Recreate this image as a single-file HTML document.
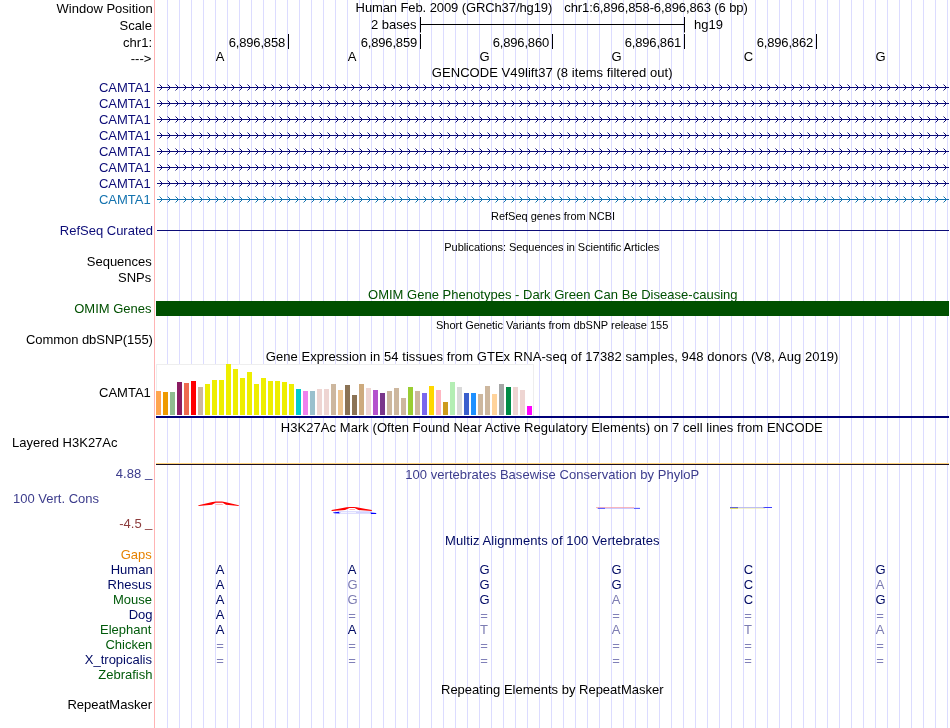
<!DOCTYPE html>
<html><head><meta charset="utf-8"><title>Genome Browser</title>
<style>
html,body{margin:0;padding:0;background:#fff;}
body{width:950px;height:728px;position:relative;overflow:hidden;-webkit-font-smoothing:antialiased;font-family:"Liberation Sans",sans-serif;font-size:13px;color:#000;}
.t{position:absolute;white-space:pre;line-height:16px;height:16px;}
.r{right:798px;text-align:right;}
.c{left:156px;width:794px;text-align:center;}
.s{font-size:11px;}
.l{position:absolute;width:16px;margin-left:-8px;text-align:center;line-height:15px;height:15px;}
svg{position:absolute;left:0;top:0;}
#tx{position:absolute;left:0;top:0;width:950px;height:728px;will-change:transform;}
</style></head><body>

<svg width="950" height="728" viewBox="0 0 950 728">
<path d="M167.5 0V728M179.5 0V728M191.5 0V728M203.5 0V728M215.5 0V728M227.5 0V728M239.5 0V728M251.5 0V728M263.5 0V728M275.5 0V728M287.5 0V728M299.5 0V728M311.5 0V728M323.5 0V728M335.5 0V728M347.5 0V728M359.5 0V728M371.5 0V728M383.5 0V728M395.5 0V728M407.5 0V728M419.5 0V728M431.5 0V728M443.5 0V728M455.5 0V728M467.5 0V728M479.5 0V728M491.5 0V728M503.5 0V728M515.5 0V728M527.5 0V728M539.5 0V728M551.5 0V728M563.5 0V728M575.5 0V728M587.5 0V728M599.5 0V728M611.5 0V728M623.5 0V728M635.5 0V728M647.5 0V728M659.5 0V728M671.5 0V728M683.5 0V728M695.5 0V728M707.5 0V728M719.5 0V728M731.5 0V728M743.5 0V728M755.5 0V728M767.5 0V728M779.5 0V728M791.5 0V728M803.5 0V728M815.5 0V728M827.5 0V728M839.5 0V728M851.5 0V728M863.5 0V728M875.5 0V728M887.5 0V728M899.5 0V728M911.5 0V728M923.5 0V728M935.5 0V728M947.5 0V728" stroke="#dcdcff" stroke-width="1" fill="none" shape-rendering="crispEdges"/>
<rect x="154" y="0" width="1" height="728" fill="#ffb4b4"/>
<path d="M157 87.5H949M159.5 84.5L162.5 87.5L159.5 90.5M167.5 84.5L170.5 87.5L167.5 90.5M175.5 84.5L178.5 87.5L175.5 90.5M183.5 84.5L186.5 87.5L183.5 90.5M191.5 84.5L194.5 87.5L191.5 90.5M199.5 84.5L202.5 87.5L199.5 90.5M207.5 84.5L210.5 87.5L207.5 90.5M215.5 84.5L218.5 87.5L215.5 90.5M223.5 84.5L226.5 87.5L223.5 90.5M231.5 84.5L234.5 87.5L231.5 90.5M239.5 84.5L242.5 87.5L239.5 90.5M247.5 84.5L250.5 87.5L247.5 90.5M255.5 84.5L258.5 87.5L255.5 90.5M263.5 84.5L266.5 87.5L263.5 90.5M271.5 84.5L274.5 87.5L271.5 90.5M279.5 84.5L282.5 87.5L279.5 90.5M287.5 84.5L290.5 87.5L287.5 90.5M295.5 84.5L298.5 87.5L295.5 90.5M303.5 84.5L306.5 87.5L303.5 90.5M311.5 84.5L314.5 87.5L311.5 90.5M319.5 84.5L322.5 87.5L319.5 90.5M327.5 84.5L330.5 87.5L327.5 90.5M335.5 84.5L338.5 87.5L335.5 90.5M343.5 84.5L346.5 87.5L343.5 90.5M351.5 84.5L354.5 87.5L351.5 90.5M359.5 84.5L362.5 87.5L359.5 90.5M367.5 84.5L370.5 87.5L367.5 90.5M375.5 84.5L378.5 87.5L375.5 90.5M383.5 84.5L386.5 87.5L383.5 90.5M391.5 84.5L394.5 87.5L391.5 90.5M399.5 84.5L402.5 87.5L399.5 90.5M407.5 84.5L410.5 87.5L407.5 90.5M415.5 84.5L418.5 87.5L415.5 90.5M423.5 84.5L426.5 87.5L423.5 90.5M431.5 84.5L434.5 87.5L431.5 90.5M439.5 84.5L442.5 87.5L439.5 90.5M447.5 84.5L450.5 87.5L447.5 90.5M455.5 84.5L458.5 87.5L455.5 90.5M463.5 84.5L466.5 87.5L463.5 90.5M471.5 84.5L474.5 87.5L471.5 90.5M479.5 84.5L482.5 87.5L479.5 90.5M487.5 84.5L490.5 87.5L487.5 90.5M495.5 84.5L498.5 87.5L495.5 90.5M503.5 84.5L506.5 87.5L503.5 90.5M511.5 84.5L514.5 87.5L511.5 90.5M519.5 84.5L522.5 87.5L519.5 90.5M527.5 84.5L530.5 87.5L527.5 90.5M535.5 84.5L538.5 87.5L535.5 90.5M543.5 84.5L546.5 87.5L543.5 90.5M551.5 84.5L554.5 87.5L551.5 90.5M559.5 84.5L562.5 87.5L559.5 90.5M567.5 84.5L570.5 87.5L567.5 90.5M575.5 84.5L578.5 87.5L575.5 90.5M583.5 84.5L586.5 87.5L583.5 90.5M591.5 84.5L594.5 87.5L591.5 90.5M599.5 84.5L602.5 87.5L599.5 90.5M607.5 84.5L610.5 87.5L607.5 90.5M615.5 84.5L618.5 87.5L615.5 90.5M623.5 84.5L626.5 87.5L623.5 90.5M631.5 84.5L634.5 87.5L631.5 90.5M639.5 84.5L642.5 87.5L639.5 90.5M647.5 84.5L650.5 87.5L647.5 90.5M655.5 84.5L658.5 87.5L655.5 90.5M663.5 84.5L666.5 87.5L663.5 90.5M671.5 84.5L674.5 87.5L671.5 90.5M679.5 84.5L682.5 87.5L679.5 90.5M687.5 84.5L690.5 87.5L687.5 90.5M695.5 84.5L698.5 87.5L695.5 90.5M703.5 84.5L706.5 87.5L703.5 90.5M711.5 84.5L714.5 87.5L711.5 90.5M719.5 84.5L722.5 87.5L719.5 90.5M727.5 84.5L730.5 87.5L727.5 90.5M735.5 84.5L738.5 87.5L735.5 90.5M743.5 84.5L746.5 87.5L743.5 90.5M751.5 84.5L754.5 87.5L751.5 90.5M759.5 84.5L762.5 87.5L759.5 90.5M767.5 84.5L770.5 87.5L767.5 90.5M775.5 84.5L778.5 87.5L775.5 90.5M783.5 84.5L786.5 87.5L783.5 90.5M791.5 84.5L794.5 87.5L791.5 90.5M799.5 84.5L802.5 87.5L799.5 90.5M807.5 84.5L810.5 87.5L807.5 90.5M815.5 84.5L818.5 87.5L815.5 90.5M823.5 84.5L826.5 87.5L823.5 90.5M831.5 84.5L834.5 87.5L831.5 90.5M839.5 84.5L842.5 87.5L839.5 90.5M847.5 84.5L850.5 87.5L847.5 90.5M855.5 84.5L858.5 87.5L855.5 90.5M863.5 84.5L866.5 87.5L863.5 90.5M871.5 84.5L874.5 87.5L871.5 90.5M879.5 84.5L882.5 87.5L879.5 90.5M887.5 84.5L890.5 87.5L887.5 90.5M895.5 84.5L898.5 87.5L895.5 90.5M903.5 84.5L906.5 87.5L903.5 90.5M911.5 84.5L914.5 87.5L911.5 90.5M919.5 84.5L922.5 87.5L919.5 90.5M927.5 84.5L930.5 87.5L927.5 90.5M935.5 84.5L938.5 87.5L935.5 90.5M943.5 84.5L946.5 87.5L943.5 90.5" stroke="#0c0c78" stroke-width="1" fill="none"/>
<path d="M157 103.5H949M159.5 100.5L162.5 103.5L159.5 106.5M167.5 100.5L170.5 103.5L167.5 106.5M175.5 100.5L178.5 103.5L175.5 106.5M183.5 100.5L186.5 103.5L183.5 106.5M191.5 100.5L194.5 103.5L191.5 106.5M199.5 100.5L202.5 103.5L199.5 106.5M207.5 100.5L210.5 103.5L207.5 106.5M215.5 100.5L218.5 103.5L215.5 106.5M223.5 100.5L226.5 103.5L223.5 106.5M231.5 100.5L234.5 103.5L231.5 106.5M239.5 100.5L242.5 103.5L239.5 106.5M247.5 100.5L250.5 103.5L247.5 106.5M255.5 100.5L258.5 103.5L255.5 106.5M263.5 100.5L266.5 103.5L263.5 106.5M271.5 100.5L274.5 103.5L271.5 106.5M279.5 100.5L282.5 103.5L279.5 106.5M287.5 100.5L290.5 103.5L287.5 106.5M295.5 100.5L298.5 103.5L295.5 106.5M303.5 100.5L306.5 103.5L303.5 106.5M311.5 100.5L314.5 103.5L311.5 106.5M319.5 100.5L322.5 103.5L319.5 106.5M327.5 100.5L330.5 103.5L327.5 106.5M335.5 100.5L338.5 103.5L335.5 106.5M343.5 100.5L346.5 103.5L343.5 106.5M351.5 100.5L354.5 103.5L351.5 106.5M359.5 100.5L362.5 103.5L359.5 106.5M367.5 100.5L370.5 103.5L367.5 106.5M375.5 100.5L378.5 103.5L375.5 106.5M383.5 100.5L386.5 103.5L383.5 106.5M391.5 100.5L394.5 103.5L391.5 106.5M399.5 100.5L402.5 103.5L399.5 106.5M407.5 100.5L410.5 103.5L407.5 106.5M415.5 100.5L418.5 103.5L415.5 106.5M423.5 100.5L426.5 103.5L423.5 106.5M431.5 100.5L434.5 103.5L431.5 106.5M439.5 100.5L442.5 103.5L439.5 106.5M447.5 100.5L450.5 103.5L447.5 106.5M455.5 100.5L458.5 103.5L455.5 106.5M463.5 100.5L466.5 103.5L463.5 106.5M471.5 100.5L474.5 103.5L471.5 106.5M479.5 100.5L482.5 103.5L479.5 106.5M487.5 100.5L490.5 103.5L487.5 106.5M495.5 100.5L498.5 103.5L495.5 106.5M503.5 100.5L506.5 103.5L503.5 106.5M511.5 100.5L514.5 103.5L511.5 106.5M519.5 100.5L522.5 103.5L519.5 106.5M527.5 100.5L530.5 103.5L527.5 106.5M535.5 100.5L538.5 103.5L535.5 106.5M543.5 100.5L546.5 103.5L543.5 106.5M551.5 100.5L554.5 103.5L551.5 106.5M559.5 100.5L562.5 103.5L559.5 106.5M567.5 100.5L570.5 103.5L567.5 106.5M575.5 100.5L578.5 103.5L575.5 106.5M583.5 100.5L586.5 103.5L583.5 106.5M591.5 100.5L594.5 103.5L591.5 106.5M599.5 100.5L602.5 103.5L599.5 106.5M607.5 100.5L610.5 103.5L607.5 106.5M615.5 100.5L618.5 103.5L615.5 106.5M623.5 100.5L626.5 103.5L623.5 106.5M631.5 100.5L634.5 103.5L631.5 106.5M639.5 100.5L642.5 103.5L639.5 106.5M647.5 100.5L650.5 103.5L647.5 106.5M655.5 100.5L658.5 103.5L655.5 106.5M663.5 100.5L666.5 103.5L663.5 106.5M671.5 100.5L674.5 103.5L671.5 106.5M679.5 100.5L682.5 103.5L679.5 106.5M687.5 100.5L690.5 103.5L687.5 106.5M695.5 100.5L698.5 103.5L695.5 106.5M703.5 100.5L706.5 103.5L703.5 106.5M711.5 100.5L714.5 103.5L711.5 106.5M719.5 100.5L722.5 103.5L719.5 106.5M727.5 100.5L730.5 103.5L727.5 106.5M735.5 100.5L738.5 103.5L735.5 106.5M743.5 100.5L746.5 103.5L743.5 106.5M751.5 100.5L754.5 103.5L751.5 106.5M759.5 100.5L762.5 103.5L759.5 106.5M767.5 100.5L770.5 103.5L767.5 106.5M775.5 100.5L778.5 103.5L775.5 106.5M783.5 100.5L786.5 103.5L783.5 106.5M791.5 100.5L794.5 103.5L791.5 106.5M799.5 100.5L802.5 103.5L799.5 106.5M807.5 100.5L810.5 103.5L807.5 106.5M815.5 100.5L818.5 103.5L815.5 106.5M823.5 100.5L826.5 103.5L823.5 106.5M831.5 100.5L834.5 103.5L831.5 106.5M839.5 100.5L842.5 103.5L839.5 106.5M847.5 100.5L850.5 103.5L847.5 106.5M855.5 100.5L858.5 103.5L855.5 106.5M863.5 100.5L866.5 103.5L863.5 106.5M871.5 100.5L874.5 103.5L871.5 106.5M879.5 100.5L882.5 103.5L879.5 106.5M887.5 100.5L890.5 103.5L887.5 106.5M895.5 100.5L898.5 103.5L895.5 106.5M903.5 100.5L906.5 103.5L903.5 106.5M911.5 100.5L914.5 103.5L911.5 106.5M919.5 100.5L922.5 103.5L919.5 106.5M927.5 100.5L930.5 103.5L927.5 106.5M935.5 100.5L938.5 103.5L935.5 106.5M943.5 100.5L946.5 103.5L943.5 106.5" stroke="#0c0c78" stroke-width="1" fill="none"/>
<path d="M157 119.5H949M159.5 116.5L162.5 119.5L159.5 122.5M167.5 116.5L170.5 119.5L167.5 122.5M175.5 116.5L178.5 119.5L175.5 122.5M183.5 116.5L186.5 119.5L183.5 122.5M191.5 116.5L194.5 119.5L191.5 122.5M199.5 116.5L202.5 119.5L199.5 122.5M207.5 116.5L210.5 119.5L207.5 122.5M215.5 116.5L218.5 119.5L215.5 122.5M223.5 116.5L226.5 119.5L223.5 122.5M231.5 116.5L234.5 119.5L231.5 122.5M239.5 116.5L242.5 119.5L239.5 122.5M247.5 116.5L250.5 119.5L247.5 122.5M255.5 116.5L258.5 119.5L255.5 122.5M263.5 116.5L266.5 119.5L263.5 122.5M271.5 116.5L274.5 119.5L271.5 122.5M279.5 116.5L282.5 119.5L279.5 122.5M287.5 116.5L290.5 119.5L287.5 122.5M295.5 116.5L298.5 119.5L295.5 122.5M303.5 116.5L306.5 119.5L303.5 122.5M311.5 116.5L314.5 119.5L311.5 122.5M319.5 116.5L322.5 119.5L319.5 122.5M327.5 116.5L330.5 119.5L327.5 122.5M335.5 116.5L338.5 119.5L335.5 122.5M343.5 116.5L346.5 119.5L343.5 122.5M351.5 116.5L354.5 119.5L351.5 122.5M359.5 116.5L362.5 119.5L359.5 122.5M367.5 116.5L370.5 119.5L367.5 122.5M375.5 116.5L378.5 119.5L375.5 122.5M383.5 116.5L386.5 119.5L383.5 122.5M391.5 116.5L394.5 119.5L391.5 122.5M399.5 116.5L402.5 119.5L399.5 122.5M407.5 116.5L410.5 119.5L407.5 122.5M415.5 116.5L418.5 119.5L415.5 122.5M423.5 116.5L426.5 119.5L423.5 122.5M431.5 116.5L434.5 119.5L431.5 122.5M439.5 116.5L442.5 119.5L439.5 122.5M447.5 116.5L450.5 119.5L447.5 122.5M455.5 116.5L458.5 119.5L455.5 122.5M463.5 116.5L466.5 119.5L463.5 122.5M471.5 116.5L474.5 119.5L471.5 122.5M479.5 116.5L482.5 119.5L479.5 122.5M487.5 116.5L490.5 119.5L487.5 122.5M495.5 116.5L498.5 119.5L495.5 122.5M503.5 116.5L506.5 119.5L503.5 122.5M511.5 116.5L514.5 119.5L511.5 122.5M519.5 116.5L522.5 119.5L519.5 122.5M527.5 116.5L530.5 119.5L527.5 122.5M535.5 116.5L538.5 119.5L535.5 122.5M543.5 116.5L546.5 119.5L543.5 122.5M551.5 116.5L554.5 119.5L551.5 122.5M559.5 116.5L562.5 119.5L559.5 122.5M567.5 116.5L570.5 119.5L567.5 122.5M575.5 116.5L578.5 119.5L575.5 122.5M583.5 116.5L586.5 119.5L583.5 122.5M591.5 116.5L594.5 119.5L591.5 122.5M599.5 116.5L602.5 119.5L599.5 122.5M607.5 116.5L610.5 119.5L607.5 122.5M615.5 116.5L618.5 119.5L615.5 122.5M623.5 116.5L626.5 119.5L623.5 122.5M631.5 116.5L634.5 119.5L631.5 122.5M639.5 116.5L642.5 119.5L639.5 122.5M647.5 116.5L650.5 119.5L647.5 122.5M655.5 116.5L658.5 119.5L655.5 122.5M663.5 116.5L666.5 119.5L663.5 122.5M671.5 116.5L674.5 119.5L671.5 122.5M679.5 116.5L682.5 119.5L679.5 122.5M687.5 116.5L690.5 119.5L687.5 122.5M695.5 116.5L698.5 119.5L695.5 122.5M703.5 116.5L706.5 119.5L703.5 122.5M711.5 116.5L714.5 119.5L711.5 122.5M719.5 116.5L722.5 119.5L719.5 122.5M727.5 116.5L730.5 119.5L727.5 122.5M735.5 116.5L738.5 119.5L735.5 122.5M743.5 116.5L746.5 119.5L743.5 122.5M751.5 116.5L754.5 119.5L751.5 122.5M759.5 116.5L762.5 119.5L759.5 122.5M767.5 116.5L770.5 119.5L767.5 122.5M775.5 116.5L778.5 119.5L775.5 122.5M783.5 116.5L786.5 119.5L783.5 122.5M791.5 116.5L794.5 119.5L791.5 122.5M799.5 116.5L802.5 119.5L799.5 122.5M807.5 116.5L810.5 119.5L807.5 122.5M815.5 116.5L818.5 119.5L815.5 122.5M823.5 116.5L826.5 119.5L823.5 122.5M831.5 116.5L834.5 119.5L831.5 122.5M839.5 116.5L842.5 119.5L839.5 122.5M847.5 116.5L850.5 119.5L847.5 122.5M855.5 116.5L858.5 119.5L855.5 122.5M863.5 116.5L866.5 119.5L863.5 122.5M871.5 116.5L874.5 119.5L871.5 122.5M879.5 116.5L882.5 119.5L879.5 122.5M887.5 116.5L890.5 119.5L887.5 122.5M895.5 116.5L898.5 119.5L895.5 122.5M903.5 116.5L906.5 119.5L903.5 122.5M911.5 116.5L914.5 119.5L911.5 122.5M919.5 116.5L922.5 119.5L919.5 122.5M927.5 116.5L930.5 119.5L927.5 122.5M935.5 116.5L938.5 119.5L935.5 122.5M943.5 116.5L946.5 119.5L943.5 122.5" stroke="#0c0c78" stroke-width="1" fill="none"/>
<path d="M157 135.5H949M159.5 132.5L162.5 135.5L159.5 138.5M167.5 132.5L170.5 135.5L167.5 138.5M175.5 132.5L178.5 135.5L175.5 138.5M183.5 132.5L186.5 135.5L183.5 138.5M191.5 132.5L194.5 135.5L191.5 138.5M199.5 132.5L202.5 135.5L199.5 138.5M207.5 132.5L210.5 135.5L207.5 138.5M215.5 132.5L218.5 135.5L215.5 138.5M223.5 132.5L226.5 135.5L223.5 138.5M231.5 132.5L234.5 135.5L231.5 138.5M239.5 132.5L242.5 135.5L239.5 138.5M247.5 132.5L250.5 135.5L247.5 138.5M255.5 132.5L258.5 135.5L255.5 138.5M263.5 132.5L266.5 135.5L263.5 138.5M271.5 132.5L274.5 135.5L271.5 138.5M279.5 132.5L282.5 135.5L279.5 138.5M287.5 132.5L290.5 135.5L287.5 138.5M295.5 132.5L298.5 135.5L295.5 138.5M303.5 132.5L306.5 135.5L303.5 138.5M311.5 132.5L314.5 135.5L311.5 138.5M319.5 132.5L322.5 135.5L319.5 138.5M327.5 132.5L330.5 135.5L327.5 138.5M335.5 132.5L338.5 135.5L335.5 138.5M343.5 132.5L346.5 135.5L343.5 138.5M351.5 132.5L354.5 135.5L351.5 138.5M359.5 132.5L362.5 135.5L359.5 138.5M367.5 132.5L370.5 135.5L367.5 138.5M375.5 132.5L378.5 135.5L375.5 138.5M383.5 132.5L386.5 135.5L383.5 138.5M391.5 132.5L394.5 135.5L391.5 138.5M399.5 132.5L402.5 135.5L399.5 138.5M407.5 132.5L410.5 135.5L407.5 138.5M415.5 132.5L418.5 135.5L415.5 138.5M423.5 132.5L426.5 135.5L423.5 138.5M431.5 132.5L434.5 135.5L431.5 138.5M439.5 132.5L442.5 135.5L439.5 138.5M447.5 132.5L450.5 135.5L447.5 138.5M455.5 132.5L458.5 135.5L455.5 138.5M463.5 132.5L466.5 135.5L463.5 138.5M471.5 132.5L474.5 135.5L471.5 138.5M479.5 132.5L482.5 135.5L479.5 138.5M487.5 132.5L490.5 135.5L487.5 138.5M495.5 132.5L498.5 135.5L495.5 138.5M503.5 132.5L506.5 135.5L503.5 138.5M511.5 132.5L514.5 135.5L511.5 138.5M519.5 132.5L522.5 135.5L519.5 138.5M527.5 132.5L530.5 135.5L527.5 138.5M535.5 132.5L538.5 135.5L535.5 138.5M543.5 132.5L546.5 135.5L543.5 138.5M551.5 132.5L554.5 135.5L551.5 138.5M559.5 132.5L562.5 135.5L559.5 138.5M567.5 132.5L570.5 135.5L567.5 138.5M575.5 132.5L578.5 135.5L575.5 138.5M583.5 132.5L586.5 135.5L583.5 138.5M591.5 132.5L594.5 135.5L591.5 138.5M599.5 132.5L602.5 135.5L599.5 138.5M607.5 132.5L610.5 135.5L607.5 138.5M615.5 132.5L618.5 135.5L615.5 138.5M623.5 132.5L626.5 135.5L623.5 138.5M631.5 132.5L634.5 135.5L631.5 138.5M639.5 132.5L642.5 135.5L639.5 138.5M647.5 132.5L650.5 135.5L647.5 138.5M655.5 132.5L658.5 135.5L655.5 138.5M663.5 132.5L666.5 135.5L663.5 138.5M671.5 132.5L674.5 135.5L671.5 138.5M679.5 132.5L682.5 135.5L679.5 138.5M687.5 132.5L690.5 135.5L687.5 138.5M695.5 132.5L698.5 135.5L695.5 138.5M703.5 132.5L706.5 135.5L703.5 138.5M711.5 132.5L714.5 135.5L711.5 138.5M719.5 132.5L722.5 135.5L719.5 138.5M727.5 132.5L730.5 135.5L727.5 138.5M735.5 132.5L738.5 135.5L735.5 138.5M743.5 132.5L746.5 135.5L743.5 138.5M751.5 132.5L754.5 135.5L751.5 138.5M759.5 132.5L762.5 135.5L759.5 138.5M767.5 132.5L770.5 135.5L767.5 138.5M775.5 132.5L778.5 135.5L775.5 138.5M783.5 132.5L786.5 135.5L783.5 138.5M791.5 132.5L794.5 135.5L791.5 138.5M799.5 132.5L802.5 135.5L799.5 138.5M807.5 132.5L810.5 135.5L807.5 138.5M815.5 132.5L818.5 135.5L815.5 138.5M823.5 132.5L826.5 135.5L823.5 138.5M831.5 132.5L834.5 135.5L831.5 138.5M839.5 132.5L842.5 135.5L839.5 138.5M847.5 132.5L850.5 135.5L847.5 138.5M855.5 132.5L858.5 135.5L855.5 138.5M863.5 132.5L866.5 135.5L863.5 138.5M871.5 132.5L874.5 135.5L871.5 138.5M879.5 132.5L882.5 135.5L879.5 138.5M887.5 132.5L890.5 135.5L887.5 138.5M895.5 132.5L898.5 135.5L895.5 138.5M903.5 132.5L906.5 135.5L903.5 138.5M911.5 132.5L914.5 135.5L911.5 138.5M919.5 132.5L922.5 135.5L919.5 138.5M927.5 132.5L930.5 135.5L927.5 138.5M935.5 132.5L938.5 135.5L935.5 138.5M943.5 132.5L946.5 135.5L943.5 138.5" stroke="#0c0c78" stroke-width="1" fill="none"/>
<path d="M157 151.5H949M159.5 148.5L162.5 151.5L159.5 154.5M167.5 148.5L170.5 151.5L167.5 154.5M175.5 148.5L178.5 151.5L175.5 154.5M183.5 148.5L186.5 151.5L183.5 154.5M191.5 148.5L194.5 151.5L191.5 154.5M199.5 148.5L202.5 151.5L199.5 154.5M207.5 148.5L210.5 151.5L207.5 154.5M215.5 148.5L218.5 151.5L215.5 154.5M223.5 148.5L226.5 151.5L223.5 154.5M231.5 148.5L234.5 151.5L231.5 154.5M239.5 148.5L242.5 151.5L239.5 154.5M247.5 148.5L250.5 151.5L247.5 154.5M255.5 148.5L258.5 151.5L255.5 154.5M263.5 148.5L266.5 151.5L263.5 154.5M271.5 148.5L274.5 151.5L271.5 154.5M279.5 148.5L282.5 151.5L279.5 154.5M287.5 148.5L290.5 151.5L287.5 154.5M295.5 148.5L298.5 151.5L295.5 154.5M303.5 148.5L306.5 151.5L303.5 154.5M311.5 148.5L314.5 151.5L311.5 154.5M319.5 148.5L322.5 151.5L319.5 154.5M327.5 148.5L330.5 151.5L327.5 154.5M335.5 148.5L338.5 151.5L335.5 154.5M343.5 148.5L346.5 151.5L343.5 154.5M351.5 148.5L354.5 151.5L351.5 154.5M359.5 148.5L362.5 151.5L359.5 154.5M367.5 148.5L370.5 151.5L367.5 154.5M375.5 148.5L378.5 151.5L375.5 154.5M383.5 148.5L386.5 151.5L383.5 154.5M391.5 148.5L394.5 151.5L391.5 154.5M399.5 148.5L402.5 151.5L399.5 154.5M407.5 148.5L410.5 151.5L407.5 154.5M415.5 148.5L418.5 151.5L415.5 154.5M423.5 148.5L426.5 151.5L423.5 154.5M431.5 148.5L434.5 151.5L431.5 154.5M439.5 148.5L442.5 151.5L439.5 154.5M447.5 148.5L450.5 151.5L447.5 154.5M455.5 148.5L458.5 151.5L455.5 154.5M463.5 148.5L466.5 151.5L463.5 154.5M471.5 148.5L474.5 151.5L471.5 154.5M479.5 148.5L482.5 151.5L479.5 154.5M487.5 148.5L490.5 151.5L487.5 154.5M495.5 148.5L498.5 151.5L495.5 154.5M503.5 148.5L506.5 151.5L503.5 154.5M511.5 148.5L514.5 151.5L511.5 154.5M519.5 148.5L522.5 151.5L519.5 154.5M527.5 148.5L530.5 151.5L527.5 154.5M535.5 148.5L538.5 151.5L535.5 154.5M543.5 148.5L546.5 151.5L543.5 154.5M551.5 148.5L554.5 151.5L551.5 154.5M559.5 148.5L562.5 151.5L559.5 154.5M567.5 148.5L570.5 151.5L567.5 154.5M575.5 148.5L578.5 151.5L575.5 154.5M583.5 148.5L586.5 151.5L583.5 154.5M591.5 148.5L594.5 151.5L591.5 154.5M599.5 148.5L602.5 151.5L599.5 154.5M607.5 148.5L610.5 151.5L607.5 154.5M615.5 148.5L618.5 151.5L615.5 154.5M623.5 148.5L626.5 151.5L623.5 154.5M631.5 148.5L634.5 151.5L631.5 154.5M639.5 148.5L642.5 151.5L639.5 154.5M647.5 148.5L650.5 151.5L647.5 154.5M655.5 148.5L658.5 151.5L655.5 154.5M663.5 148.5L666.5 151.5L663.5 154.5M671.5 148.5L674.5 151.5L671.5 154.5M679.5 148.5L682.5 151.5L679.5 154.5M687.5 148.5L690.5 151.5L687.5 154.5M695.5 148.5L698.5 151.5L695.5 154.5M703.5 148.5L706.5 151.5L703.5 154.5M711.5 148.5L714.5 151.5L711.5 154.5M719.5 148.5L722.5 151.5L719.5 154.5M727.5 148.5L730.5 151.5L727.5 154.5M735.5 148.5L738.5 151.5L735.5 154.5M743.5 148.5L746.5 151.5L743.5 154.5M751.5 148.5L754.5 151.5L751.5 154.5M759.5 148.5L762.5 151.5L759.5 154.5M767.5 148.5L770.5 151.5L767.5 154.5M775.5 148.5L778.5 151.5L775.5 154.5M783.5 148.5L786.5 151.5L783.5 154.5M791.5 148.5L794.5 151.5L791.5 154.5M799.5 148.5L802.5 151.5L799.5 154.5M807.5 148.5L810.5 151.5L807.5 154.5M815.5 148.5L818.5 151.5L815.5 154.5M823.5 148.5L826.5 151.5L823.5 154.5M831.5 148.5L834.5 151.5L831.5 154.5M839.5 148.5L842.5 151.5L839.5 154.5M847.5 148.5L850.5 151.5L847.5 154.5M855.5 148.5L858.5 151.5L855.5 154.5M863.5 148.5L866.5 151.5L863.5 154.5M871.5 148.5L874.5 151.5L871.5 154.5M879.5 148.5L882.5 151.5L879.5 154.5M887.5 148.5L890.5 151.5L887.5 154.5M895.5 148.5L898.5 151.5L895.5 154.5M903.5 148.5L906.5 151.5L903.5 154.5M911.5 148.5L914.5 151.5L911.5 154.5M919.5 148.5L922.5 151.5L919.5 154.5M927.5 148.5L930.5 151.5L927.5 154.5M935.5 148.5L938.5 151.5L935.5 154.5M943.5 148.5L946.5 151.5L943.5 154.5" stroke="#0c0c78" stroke-width="1" fill="none"/>
<path d="M157 167.5H949M159.5 164.5L162.5 167.5L159.5 170.5M167.5 164.5L170.5 167.5L167.5 170.5M175.5 164.5L178.5 167.5L175.5 170.5M183.5 164.5L186.5 167.5L183.5 170.5M191.5 164.5L194.5 167.5L191.5 170.5M199.5 164.5L202.5 167.5L199.5 170.5M207.5 164.5L210.5 167.5L207.5 170.5M215.5 164.5L218.5 167.5L215.5 170.5M223.5 164.5L226.5 167.5L223.5 170.5M231.5 164.5L234.5 167.5L231.5 170.5M239.5 164.5L242.5 167.5L239.5 170.5M247.5 164.5L250.5 167.5L247.5 170.5M255.5 164.5L258.5 167.5L255.5 170.5M263.5 164.5L266.5 167.5L263.5 170.5M271.5 164.5L274.5 167.5L271.5 170.5M279.5 164.5L282.5 167.5L279.5 170.5M287.5 164.5L290.5 167.5L287.5 170.5M295.5 164.5L298.5 167.5L295.5 170.5M303.5 164.5L306.5 167.5L303.5 170.5M311.5 164.5L314.5 167.5L311.5 170.5M319.5 164.5L322.5 167.5L319.5 170.5M327.5 164.5L330.5 167.5L327.5 170.5M335.5 164.5L338.5 167.5L335.5 170.5M343.5 164.5L346.5 167.5L343.5 170.5M351.5 164.5L354.5 167.5L351.5 170.5M359.5 164.5L362.5 167.5L359.5 170.5M367.5 164.5L370.5 167.5L367.5 170.5M375.5 164.5L378.5 167.5L375.5 170.5M383.5 164.5L386.5 167.5L383.5 170.5M391.5 164.5L394.5 167.5L391.5 170.5M399.5 164.5L402.5 167.5L399.5 170.5M407.5 164.5L410.5 167.5L407.5 170.5M415.5 164.5L418.5 167.5L415.5 170.5M423.5 164.5L426.5 167.5L423.5 170.5M431.5 164.5L434.5 167.5L431.5 170.5M439.5 164.5L442.5 167.5L439.5 170.5M447.5 164.5L450.5 167.5L447.5 170.5M455.5 164.5L458.5 167.5L455.5 170.5M463.5 164.5L466.5 167.5L463.5 170.5M471.5 164.5L474.5 167.5L471.5 170.5M479.5 164.5L482.5 167.5L479.5 170.5M487.5 164.5L490.5 167.5L487.5 170.5M495.5 164.5L498.5 167.5L495.5 170.5M503.5 164.5L506.5 167.5L503.5 170.5M511.5 164.5L514.5 167.5L511.5 170.5M519.5 164.5L522.5 167.5L519.5 170.5M527.5 164.5L530.5 167.5L527.5 170.5M535.5 164.5L538.5 167.5L535.5 170.5M543.5 164.5L546.5 167.5L543.5 170.5M551.5 164.5L554.5 167.5L551.5 170.5M559.5 164.5L562.5 167.5L559.5 170.5M567.5 164.5L570.5 167.5L567.5 170.5M575.5 164.5L578.5 167.5L575.5 170.5M583.5 164.5L586.5 167.5L583.5 170.5M591.5 164.5L594.5 167.5L591.5 170.5M599.5 164.5L602.5 167.5L599.5 170.5M607.5 164.5L610.5 167.5L607.5 170.5M615.5 164.5L618.5 167.5L615.5 170.5M623.5 164.5L626.5 167.5L623.5 170.5M631.5 164.5L634.5 167.5L631.5 170.5M639.5 164.5L642.5 167.5L639.5 170.5M647.5 164.5L650.5 167.5L647.5 170.5M655.5 164.5L658.5 167.5L655.5 170.5M663.5 164.5L666.5 167.5L663.5 170.5M671.5 164.5L674.5 167.5L671.5 170.5M679.5 164.5L682.5 167.5L679.5 170.5M687.5 164.5L690.5 167.5L687.5 170.5M695.5 164.5L698.5 167.5L695.5 170.5M703.5 164.5L706.5 167.5L703.5 170.5M711.5 164.5L714.5 167.5L711.5 170.5M719.5 164.5L722.5 167.5L719.5 170.5M727.5 164.5L730.5 167.5L727.5 170.5M735.5 164.5L738.5 167.5L735.5 170.5M743.5 164.5L746.5 167.5L743.5 170.5M751.5 164.5L754.5 167.5L751.5 170.5M759.5 164.5L762.5 167.5L759.5 170.5M767.5 164.5L770.5 167.5L767.5 170.5M775.5 164.5L778.5 167.5L775.5 170.5M783.5 164.5L786.5 167.5L783.5 170.5M791.5 164.5L794.5 167.5L791.5 170.5M799.5 164.5L802.5 167.5L799.5 170.5M807.5 164.5L810.5 167.5L807.5 170.5M815.5 164.5L818.5 167.5L815.5 170.5M823.5 164.5L826.5 167.5L823.5 170.5M831.5 164.5L834.5 167.5L831.5 170.5M839.5 164.5L842.5 167.5L839.5 170.5M847.5 164.5L850.5 167.5L847.5 170.5M855.5 164.5L858.5 167.5L855.5 170.5M863.5 164.5L866.5 167.5L863.5 170.5M871.5 164.5L874.5 167.5L871.5 170.5M879.5 164.5L882.5 167.5L879.5 170.5M887.5 164.5L890.5 167.5L887.5 170.5M895.5 164.5L898.5 167.5L895.5 170.5M903.5 164.5L906.5 167.5L903.5 170.5M911.5 164.5L914.5 167.5L911.5 170.5M919.5 164.5L922.5 167.5L919.5 170.5M927.5 164.5L930.5 167.5L927.5 170.5M935.5 164.5L938.5 167.5L935.5 170.5M943.5 164.5L946.5 167.5L943.5 170.5" stroke="#0c0c78" stroke-width="1" fill="none"/>
<path d="M157 183.5H949M159.5 180.5L162.5 183.5L159.5 186.5M167.5 180.5L170.5 183.5L167.5 186.5M175.5 180.5L178.5 183.5L175.5 186.5M183.5 180.5L186.5 183.5L183.5 186.5M191.5 180.5L194.5 183.5L191.5 186.5M199.5 180.5L202.5 183.5L199.5 186.5M207.5 180.5L210.5 183.5L207.5 186.5M215.5 180.5L218.5 183.5L215.5 186.5M223.5 180.5L226.5 183.5L223.5 186.5M231.5 180.5L234.5 183.5L231.5 186.5M239.5 180.5L242.5 183.5L239.5 186.5M247.5 180.5L250.5 183.5L247.5 186.5M255.5 180.5L258.5 183.5L255.5 186.5M263.5 180.5L266.5 183.5L263.5 186.5M271.5 180.5L274.5 183.5L271.5 186.5M279.5 180.5L282.5 183.5L279.5 186.5M287.5 180.5L290.5 183.5L287.5 186.5M295.5 180.5L298.5 183.5L295.5 186.5M303.5 180.5L306.5 183.5L303.5 186.5M311.5 180.5L314.5 183.5L311.5 186.5M319.5 180.5L322.5 183.5L319.5 186.5M327.5 180.5L330.5 183.5L327.5 186.5M335.5 180.5L338.5 183.5L335.5 186.5M343.5 180.5L346.5 183.5L343.5 186.5M351.5 180.5L354.5 183.5L351.5 186.5M359.5 180.5L362.5 183.5L359.5 186.5M367.5 180.5L370.5 183.5L367.5 186.5M375.5 180.5L378.5 183.5L375.5 186.5M383.5 180.5L386.5 183.5L383.5 186.5M391.5 180.5L394.5 183.5L391.5 186.5M399.5 180.5L402.5 183.5L399.5 186.5M407.5 180.5L410.5 183.5L407.5 186.5M415.5 180.5L418.5 183.5L415.5 186.5M423.5 180.5L426.5 183.5L423.5 186.5M431.5 180.5L434.5 183.5L431.5 186.5M439.5 180.5L442.5 183.5L439.5 186.5M447.5 180.5L450.5 183.5L447.5 186.5M455.5 180.5L458.5 183.5L455.5 186.5M463.5 180.5L466.5 183.5L463.5 186.5M471.5 180.5L474.5 183.5L471.5 186.5M479.5 180.5L482.5 183.5L479.5 186.5M487.5 180.5L490.5 183.5L487.5 186.5M495.5 180.5L498.5 183.5L495.5 186.5M503.5 180.5L506.5 183.5L503.5 186.5M511.5 180.5L514.5 183.5L511.5 186.5M519.5 180.5L522.5 183.5L519.5 186.5M527.5 180.5L530.5 183.5L527.5 186.5M535.5 180.5L538.5 183.5L535.5 186.5M543.5 180.5L546.5 183.5L543.5 186.5M551.5 180.5L554.5 183.5L551.5 186.5M559.5 180.5L562.5 183.5L559.5 186.5M567.5 180.5L570.5 183.5L567.5 186.5M575.5 180.5L578.5 183.5L575.5 186.5M583.5 180.5L586.5 183.5L583.5 186.5M591.5 180.5L594.5 183.5L591.5 186.5M599.5 180.5L602.5 183.5L599.5 186.5M607.5 180.5L610.5 183.5L607.5 186.5M615.5 180.5L618.5 183.5L615.5 186.5M623.5 180.5L626.5 183.5L623.5 186.5M631.5 180.5L634.5 183.5L631.5 186.5M639.5 180.5L642.5 183.5L639.5 186.5M647.5 180.5L650.5 183.5L647.5 186.5M655.5 180.5L658.5 183.5L655.5 186.5M663.5 180.5L666.5 183.5L663.5 186.5M671.5 180.5L674.5 183.5L671.5 186.5M679.5 180.5L682.5 183.5L679.5 186.5M687.5 180.5L690.5 183.5L687.5 186.5M695.5 180.5L698.5 183.5L695.5 186.5M703.5 180.5L706.5 183.5L703.5 186.5M711.5 180.5L714.5 183.5L711.5 186.5M719.5 180.5L722.5 183.5L719.5 186.5M727.5 180.5L730.5 183.5L727.5 186.5M735.5 180.5L738.5 183.5L735.5 186.5M743.5 180.5L746.5 183.5L743.5 186.5M751.5 180.5L754.5 183.5L751.5 186.5M759.5 180.5L762.5 183.5L759.5 186.5M767.5 180.5L770.5 183.5L767.5 186.5M775.5 180.5L778.5 183.5L775.5 186.5M783.5 180.5L786.5 183.5L783.5 186.5M791.5 180.5L794.5 183.5L791.5 186.5M799.5 180.5L802.5 183.5L799.5 186.5M807.5 180.5L810.5 183.5L807.5 186.5M815.5 180.5L818.5 183.5L815.5 186.5M823.5 180.5L826.5 183.5L823.5 186.5M831.5 180.5L834.5 183.5L831.5 186.5M839.5 180.5L842.5 183.5L839.5 186.5M847.5 180.5L850.5 183.5L847.5 186.5M855.5 180.5L858.5 183.5L855.5 186.5M863.5 180.5L866.5 183.5L863.5 186.5M871.5 180.5L874.5 183.5L871.5 186.5M879.5 180.5L882.5 183.5L879.5 186.5M887.5 180.5L890.5 183.5L887.5 186.5M895.5 180.5L898.5 183.5L895.5 186.5M903.5 180.5L906.5 183.5L903.5 186.5M911.5 180.5L914.5 183.5L911.5 186.5M919.5 180.5L922.5 183.5L919.5 186.5M927.5 180.5L930.5 183.5L927.5 186.5M935.5 180.5L938.5 183.5L935.5 186.5M943.5 180.5L946.5 183.5L943.5 186.5" stroke="#0c0c78" stroke-width="1" fill="none"/>
<path d="M157 199.5H949M159.5 196.5L162.5 199.5L159.5 202.5M167.5 196.5L170.5 199.5L167.5 202.5M175.5 196.5L178.5 199.5L175.5 202.5M183.5 196.5L186.5 199.5L183.5 202.5M191.5 196.5L194.5 199.5L191.5 202.5M199.5 196.5L202.5 199.5L199.5 202.5M207.5 196.5L210.5 199.5L207.5 202.5M215.5 196.5L218.5 199.5L215.5 202.5M223.5 196.5L226.5 199.5L223.5 202.5M231.5 196.5L234.5 199.5L231.5 202.5M239.5 196.5L242.5 199.5L239.5 202.5M247.5 196.5L250.5 199.5L247.5 202.5M255.5 196.5L258.5 199.5L255.5 202.5M263.5 196.5L266.5 199.5L263.5 202.5M271.5 196.5L274.5 199.5L271.5 202.5M279.5 196.5L282.5 199.5L279.5 202.5M287.5 196.5L290.5 199.5L287.5 202.5M295.5 196.5L298.5 199.5L295.5 202.5M303.5 196.5L306.5 199.5L303.5 202.5M311.5 196.5L314.5 199.5L311.5 202.5M319.5 196.5L322.5 199.5L319.5 202.5M327.5 196.5L330.5 199.5L327.5 202.5M335.5 196.5L338.5 199.5L335.5 202.5M343.5 196.5L346.5 199.5L343.5 202.5M351.5 196.5L354.5 199.5L351.5 202.5M359.5 196.5L362.5 199.5L359.5 202.5M367.5 196.5L370.5 199.5L367.5 202.5M375.5 196.5L378.5 199.5L375.5 202.5M383.5 196.5L386.5 199.5L383.5 202.5M391.5 196.5L394.5 199.5L391.5 202.5M399.5 196.5L402.5 199.5L399.5 202.5M407.5 196.5L410.5 199.5L407.5 202.5M415.5 196.5L418.5 199.5L415.5 202.5M423.5 196.5L426.5 199.5L423.5 202.5M431.5 196.5L434.5 199.5L431.5 202.5M439.5 196.5L442.5 199.5L439.5 202.5M447.5 196.5L450.5 199.5L447.5 202.5M455.5 196.5L458.5 199.5L455.5 202.5M463.5 196.5L466.5 199.5L463.5 202.5M471.5 196.5L474.5 199.5L471.5 202.5M479.5 196.5L482.5 199.5L479.5 202.5M487.5 196.5L490.5 199.5L487.5 202.5M495.5 196.5L498.5 199.5L495.5 202.5M503.5 196.5L506.5 199.5L503.5 202.5M511.5 196.5L514.5 199.5L511.5 202.5M519.5 196.5L522.5 199.5L519.5 202.5M527.5 196.5L530.5 199.5L527.5 202.5M535.5 196.5L538.5 199.5L535.5 202.5M543.5 196.5L546.5 199.5L543.5 202.5M551.5 196.5L554.5 199.5L551.5 202.5M559.5 196.5L562.5 199.5L559.5 202.5M567.5 196.5L570.5 199.5L567.5 202.5M575.5 196.5L578.5 199.5L575.5 202.5M583.5 196.5L586.5 199.5L583.5 202.5M591.5 196.5L594.5 199.5L591.5 202.5M599.5 196.5L602.5 199.5L599.5 202.5M607.5 196.5L610.5 199.5L607.5 202.5M615.5 196.5L618.5 199.5L615.5 202.5M623.5 196.5L626.5 199.5L623.5 202.5M631.5 196.5L634.5 199.5L631.5 202.5M639.5 196.5L642.5 199.5L639.5 202.5M647.5 196.5L650.5 199.5L647.5 202.5M655.5 196.5L658.5 199.5L655.5 202.5M663.5 196.5L666.5 199.5L663.5 202.5M671.5 196.5L674.5 199.5L671.5 202.5M679.5 196.5L682.5 199.5L679.5 202.5M687.5 196.5L690.5 199.5L687.5 202.5M695.5 196.5L698.5 199.5L695.5 202.5M703.5 196.5L706.5 199.5L703.5 202.5M711.5 196.5L714.5 199.5L711.5 202.5M719.5 196.5L722.5 199.5L719.5 202.5M727.5 196.5L730.5 199.5L727.5 202.5M735.5 196.5L738.5 199.5L735.5 202.5M743.5 196.5L746.5 199.5L743.5 202.5M751.5 196.5L754.5 199.5L751.5 202.5M759.5 196.5L762.5 199.5L759.5 202.5M767.5 196.5L770.5 199.5L767.5 202.5M775.5 196.5L778.5 199.5L775.5 202.5M783.5 196.5L786.5 199.5L783.5 202.5M791.5 196.5L794.5 199.5L791.5 202.5M799.5 196.5L802.5 199.5L799.5 202.5M807.5 196.5L810.5 199.5L807.5 202.5M815.5 196.5L818.5 199.5L815.5 202.5M823.5 196.5L826.5 199.5L823.5 202.5M831.5 196.5L834.5 199.5L831.5 202.5M839.5 196.5L842.5 199.5L839.5 202.5M847.5 196.5L850.5 199.5L847.5 202.5M855.5 196.5L858.5 199.5L855.5 202.5M863.5 196.5L866.5 199.5L863.5 202.5M871.5 196.5L874.5 199.5L871.5 202.5M879.5 196.5L882.5 199.5L879.5 202.5M887.5 196.5L890.5 199.5L887.5 202.5M895.5 196.5L898.5 199.5L895.5 202.5M903.5 196.5L906.5 199.5L903.5 202.5M911.5 196.5L914.5 199.5L911.5 202.5M919.5 196.5L922.5 199.5L919.5 202.5M927.5 196.5L930.5 199.5L927.5 202.5M935.5 196.5L938.5 199.5L935.5 202.5M943.5 196.5L946.5 199.5L943.5 202.5" stroke="#1473af" stroke-width="1" fill="none"/>
<rect x="157" y="230" width="792" height="1" fill="#0c0c78"/>
<rect x="156" y="301" width="793" height="15" fill="#005000"/>
<rect x="420" y="17" width="1" height="15.5" fill="#000"/><rect x="684" y="17" width="1" height="15.5" fill="#000"/><rect x="420" y="24" width="265" height="1" fill="#000"/>
<rect x="288" y="34" width="1" height="15" fill="#000"/>
<rect x="420" y="34" width="1" height="15" fill="#000"/>
<rect x="552" y="34" width="1" height="15" fill="#000"/>
<rect x="684" y="34" width="1" height="15" fill="#000"/>
<rect x="816" y="34" width="1" height="15" fill="#000"/>
<rect x="156.5" y="364.5" width="377" height="52" fill="#fff" stroke="#eeeeee" stroke-width="1"/>
<rect x="156" y="391" width="5" height="24" fill="#FFA54F"/>
<rect x="163" y="392" width="5" height="23" fill="#EE9A00"/>
<rect x="170" y="392" width="5" height="23" fill="#8FBC8F"/>
<rect x="177" y="382" width="5" height="33" fill="#8B1C62"/>
<rect x="184" y="383" width="5" height="32" fill="#EE6A50"/>
<rect x="191" y="381" width="5" height="34" fill="#FF0000"/>
<rect x="198" y="387" width="5" height="28" fill="#CDB79E"/>
<rect x="205" y="384" width="5" height="31" fill="#EEEE00"/>
<rect x="212" y="380" width="5" height="35" fill="#EEEE00"/>
<rect x="219" y="380" width="5" height="35" fill="#EEEE00"/>
<rect x="226" y="364" width="5" height="51" fill="#EEEE00"/>
<rect x="233" y="369" width="5" height="46" fill="#EEEE00"/>
<rect x="240" y="378" width="5" height="37" fill="#EEEE00"/>
<rect x="247" y="372" width="5" height="43" fill="#EEEE00"/>
<rect x="254" y="384" width="5" height="31" fill="#EEEE00"/>
<rect x="261" y="378" width="5" height="37" fill="#EEEE00"/>
<rect x="268" y="381" width="5" height="34" fill="#EEEE00"/>
<rect x="275" y="381" width="5" height="34" fill="#EEEE00"/>
<rect x="282" y="382" width="5" height="33" fill="#EEEE00"/>
<rect x="289" y="384" width="5" height="31" fill="#EEEE00"/>
<rect x="296" y="389" width="5" height="26" fill="#00CDCD"/>
<rect x="303" y="391" width="5" height="24" fill="#EE82EE"/>
<rect x="310" y="391" width="5" height="24" fill="#9AC0CD"/>
<rect x="317" y="389" width="5" height="26" fill="#EED5D2"/>
<rect x="324" y="389" width="5" height="26" fill="#EED5D2"/>
<rect x="331" y="384" width="5" height="31" fill="#CDB79E"/>
<rect x="338" y="390" width="5" height="25" fill="#EEC591"/>
<rect x="345" y="385" width="5" height="30" fill="#8B7355"/>
<rect x="352" y="395" width="5" height="20" fill="#8B7355"/>
<rect x="359" y="384" width="5" height="31" fill="#CDAA7D"/>
<rect x="366" y="388" width="5" height="27" fill="#EED5D2"/>
<rect x="373" y="390" width="5" height="25" fill="#B452CD"/>
<rect x="380" y="393" width="5" height="22" fill="#7A378B"/>
<rect x="387" y="391" width="5" height="24" fill="#CDB79E"/>
<rect x="394" y="388" width="5" height="27" fill="#CDB79E"/>
<rect x="401" y="398" width="5" height="17" fill="#CDB79E"/>
<rect x="408" y="387" width="5" height="28" fill="#9ACD32"/>
<rect x="415" y="391" width="5" height="24" fill="#CDB79E"/>
<rect x="422" y="393" width="5" height="22" fill="#7A67EE"/>
<rect x="429" y="386" width="5" height="29" fill="#FFD700"/>
<rect x="436" y="390" width="5" height="25" fill="#FFB6C1"/>
<rect x="443" y="402" width="5" height="13" fill="#CD9B1D"/>
<rect x="450" y="382" width="5" height="33" fill="#B4EEB4"/>
<rect x="457" y="387" width="5" height="28" fill="#D9D9D9"/>
<rect x="464" y="393" width="5" height="22" fill="#3A5FCD"/>
<rect x="471" y="393" width="5" height="22" fill="#1E90FF"/>
<rect x="478" y="394" width="5" height="21" fill="#CDB79E"/>
<rect x="485" y="386" width="5" height="29" fill="#CDB79E"/>
<rect x="492" y="394" width="5" height="21" fill="#FFD39B"/>
<rect x="499" y="384" width="5" height="31" fill="#A6A6A6"/>
<rect x="506" y="387" width="5" height="28" fill="#008B45"/>
<rect x="513" y="387" width="5" height="28" fill="#EED5D2"/>
<rect x="520" y="390" width="5" height="25" fill="#EED5D2"/>
<rect x="527" y="406" width="5" height="9" fill="#FF00FF"/>
<rect x="156" y="416" width="793" height="2" fill="#000078"/>
<rect x="156" y="463" width="793" height="1" fill="#ffd27a"/>
<rect x="156" y="464" width="793" height="1" fill="#1c1020"/>
<path d="M198.4 505.2L212.4 502L216 501.6H222L224.8 502L238.8 505.2V505.9L226 504.7L222.6 502.8H215.6L212 504.7L198.4 505.9Z" fill="#ff0000"/>
<path d="M215.5 504.4H222.8" stroke="#ff9090" stroke-width="0.7" fill="none"/>
<path d="M331.6 510.1L346.6 507.3L350 506.9H354L356.6 507.3L371.8 510.1V511L358.5 509.9L354.6 508.1H349.5L345 509.9L331.6 511Z" fill="#ff0000"/>
<path d="M349.5 509.5H355" stroke="#ff9090" stroke-width="0.7" fill="none"/>
<path d="M339 511.3H372V513.7H339ZM341 512.2V513H356V512.2Z" fill="#d4d4ff" fill-rule="evenodd"/>
<path d="M332.9 512.5L339 511.7L339.6 513.4L334 513.3Z" fill="#0000ff"/>
<path d="M370.5 512.6L376.2 513L376.2 514L371 513.9Z" fill="#0000ff"/>
<path d="M596 507.6H634" stroke="#ff9a9a" stroke-width="0.8" fill="none"/>
<path d="M597 508.4H640" stroke="#b8b8ff" stroke-width="0.8" fill="none"/>
<path d="M598 508.4H605M634 508.4H640" stroke="#4848ff" stroke-width="0.9" fill="none"/>
<path d="M730 507.5H772" stroke="#b0b0ff" stroke-width="0.9" fill="none"/>
<path d="M730 507.5H738M763.5 507.5H772" stroke="#3030ff" stroke-width="0.9" fill="none"/>
<path d="M730 508.3H765" stroke="#e8e8a0" stroke-width="0.7" fill="none"/>
<path d="M730 508.3H738" stroke="#c8c820" stroke-width="0.7" fill="none"/>
<rect x="144.8" y="479.05" width="7.7" height="0.85" fill="#3c3c8c"/><rect x="144.8" y="529.15" width="7.7" height="0.85" fill="#8c3c3c"/>
</svg>
<div id="tx">
<div class="t r" style="top:1px;margin-right:-0.7px;">Window Position</div>
<div class="t r" style="top:18px;">Scale</div>
<div class="t r" style="top:35px;">chr1:</div>
<div class="t r" style="top:51px;margin-right:0.7px;">---&gt;</div>
<div class="t r" style="top:80px;color:#0c0c78;margin-right:1.25px;">CAMTA1</div>
<div class="t r" style="top:96px;color:#0c0c78;margin-right:1.25px;">CAMTA1</div>
<div class="t r" style="top:112px;color:#0c0c78;margin-right:1.25px;">CAMTA1</div>
<div class="t r" style="top:128px;color:#0c0c78;margin-right:1.25px;">CAMTA1</div>
<div class="t r" style="top:144px;color:#0c0c78;margin-right:1.25px;">CAMTA1</div>
<div class="t r" style="top:160px;color:#0c0c78;margin-right:1.25px;">CAMTA1</div>
<div class="t r" style="top:176px;color:#0c0c78;margin-right:1.25px;">CAMTA1</div>
<div class="t r" style="top:192px;color:#1473af;margin-right:1.25px;">CAMTA1</div>
<div class="t r" style="top:223px;color:#0c0c78;margin-right:-1px;">RefSeq Curated</div>
<div class="t r" style="top:254px;margin-right:0.2px;">Sequences</div>
<div class="t r" style="top:270px;margin-right:0.75px;">SNPs</div>
<div class="t r" style="top:301px;color:#005000;margin-right:0.5px;">OMIM Genes</div>
<div class="t " style="top:332px;left:26px;letter-spacing:-0.06px;">Common dbSNP(155)</div>
<div class="t r" style="top:385px;margin-right:1.2px;">CAMTA1</div>
<div class="t " style="top:435px;left:12px;">Layered H3K27Ac</div>
<div class="t r" style="top:466px;color:#3c3c8c;">4.88 <span style="visibility:hidden">_</span></div>
<div class="t " style="top:491px;left:13px;color:#3c3c8c;">100 Vert. Cons</div>
<div class="t r" style="top:516px;color:#8c3c3c;margin-right:-0.5px;">-4.5 <span style="visibility:hidden">_</span></div>
<div class="t r" style="top:547px;color:#e68200;margin-right:0.25px;">Gaps</div>
<div class="t r" style="top:562px;color:#000a64;margin-right:-0.65px;">Human</div>
<div class="t r" style="top:577px;color:#000a64;margin-right:0.35px;">Rhesus</div>
<div class="t r" style="top:592px;color:#005a0a;">Mouse</div>
<div class="t r" style="top:607px;color:#000a64;margin-right:-0.55px;">Dog</div>
<div class="t r" style="top:622px;color:#005a0a;margin-right:0.65px;">Elephant</div>
<div class="t r" style="top:637px;color:#005a0a;margin-right:-0.35px;">Chicken</div>
<div class="t r" style="top:652px;color:#000a64;">X_tropicalis</div>
<div class="t r" style="top:667px;color:#005a0a;margin-right:-0.5px;">Zebrafish</div>
<div class="t r" style="top:697px;">RepeatMasker</div>
<div class="t" style="left:355.6px;top:0px;letter-spacing:-0.1px;">Human Feb. 2009 (GRCh37/hg19)</div>
<div class="t" style="left:564.3px;top:0px;letter-spacing:-0.1px;">chr1:6,896,858-6,896,863 (6 bp)</div>
<div class="t " style="top:17px;left:371px;">2 bases</div>
<div class="t " style="top:17px;left:694px;">hg19</div>
<div class="t " style="top:35px;right:664.9px;text-align:right;letter-spacing:-0.15px;">6,896,858</div>
<div class="t " style="top:35px;right:532.9px;text-align:right;letter-spacing:-0.15px;">6,896,859</div>
<div class="t " style="top:35px;right:400.9px;text-align:right;letter-spacing:-0.15px;">6,896,860</div>
<div class="t " style="top:35px;right:268.9px;text-align:right;letter-spacing:-0.15px;">6,896,861</div>
<div class="t " style="top:35px;right:136.9px;text-align:right;letter-spacing:-0.15px;">6,896,862</div>
<div class="t" style="left:431.8px;top:65px;letter-spacing:0.06px;">GENCODE V49lift37 (8 items filtered out)</div>
<div class="t s" style="left:491px;top:208px;">RefSeq genes from NCBI</div>
<div class="t s" style="left:444.35px;top:239px;letter-spacing:-0.06px;">Publications: Sequences in Scientific Articles</div>
<div class="t" style="left:368px;top:287px;letter-spacing:0.02px;color:#005000;">OMIM Gene Phenotypes - Dark Green Can Be Disease-causing</div>
<div class="t s" style="left:436px;top:317px;letter-spacing:-0.02px;">Short Genetic Variants from dbSNP release 155</div>
<div class="t" style="left:265.8px;top:349px;letter-spacing:0.06px;">Gene Expression in 54 tissues from GTEx RNA-seq of 17382 samples, 948 donors (V8, Aug 2019)</div>
<div class="t" style="left:280.8px;top:420px;letter-spacing:0.052px;">H3K27Ac Mark (Often Found Near Active Regulatory Elements) on 7 cell lines from ENCODE</div>
<div class="t" style="left:405.3px;top:467px;letter-spacing:0.04px;color:#3c3c8c;">100 vertebrates Basewise Conservation by PhyloP</div>
<div class="t" style="left:445px;top:533px;letter-spacing:0.1px;color:#000a64;">Multiz Alignments of 100 Vertebrates</div>
<div class="t" style="left:441px;top:682px;">Repeating Elements by RepeatMasker</div>
<div class="l" style="left:220px;top:49px;">A</div>
<div class="l" style="left:352px;top:49px;">A</div>
<div class="l" style="left:484.5px;top:49px;">G</div>
<div class="l" style="left:616.5px;top:49px;">G</div>
<div class="l" style="left:748.5px;top:49px;">C</div>
<div class="l" style="left:880.5px;top:49px;">G</div>
<div class="l" style="left:220px;top:562px;color:#000a64;">A</div>
<div class="l" style="left:352px;top:562px;color:#000a64;">A</div>
<div class="l" style="left:484.5px;top:562px;color:#000a64;">G</div>
<div class="l" style="left:616.5px;top:562px;color:#000a64;">G</div>
<div class="l" style="left:748.5px;top:562px;color:#000a64;">C</div>
<div class="l" style="left:880.5px;top:562px;color:#000a64;">G</div>
<div class="l" style="left:220px;top:577px;color:#000a64;">A</div>
<div class="l" style="left:352.5px;top:577px;color:#7c7cb2;">G</div>
<div class="l" style="left:484.5px;top:577px;color:#000a64;">G</div>
<div class="l" style="left:616.5px;top:577px;color:#000a64;">G</div>
<div class="l" style="left:748.5px;top:577px;color:#000a64;">C</div>
<div class="l" style="left:880px;top:577px;color:#7c7cb2;">A</div>
<div class="l" style="left:220px;top:592px;color:#000a64;">A</div>
<div class="l" style="left:352.5px;top:592px;color:#7c7cb2;">G</div>
<div class="l" style="left:484.5px;top:592px;color:#000a64;">G</div>
<div class="l" style="left:616px;top:592px;color:#7c7cb2;">A</div>
<div class="l" style="left:748.5px;top:592px;color:#000a64;">C</div>
<div class="l" style="left:880.5px;top:592px;color:#000a64;">G</div>
<div class="l" style="left:220px;top:607px;color:#000a64;">A</div>
<div class="l" style="left:352px;top:608px;color:#8080b8;">=</div>
<div class="l" style="left:484px;top:608px;color:#8080b8;">=</div>
<div class="l" style="left:616px;top:608px;color:#8080b8;">=</div>
<div class="l" style="left:748px;top:608px;color:#8080b8;">=</div>
<div class="l" style="left:880px;top:608px;color:#8080b8;">=</div>
<div class="l" style="left:220px;top:622px;color:#000a64;">A</div>
<div class="l" style="left:352px;top:622px;color:#000a64;">A</div>
<div class="l" style="left:484px;top:622px;color:#7c7cb2;">T</div>
<div class="l" style="left:616px;top:622px;color:#7c7cb2;">A</div>
<div class="l" style="left:748px;top:622px;color:#7c7cb2;">T</div>
<div class="l" style="left:880px;top:622px;color:#7c7cb2;">A</div>
<div class="l" style="left:220px;top:638px;color:#8080b8;">=</div>
<div class="l" style="left:352px;top:638px;color:#8080b8;">=</div>
<div class="l" style="left:484px;top:638px;color:#8080b8;">=</div>
<div class="l" style="left:616px;top:638px;color:#8080b8;">=</div>
<div class="l" style="left:748px;top:638px;color:#8080b8;">=</div>
<div class="l" style="left:880px;top:638px;color:#8080b8;">=</div>
<div class="l" style="left:220px;top:653px;color:#8080b8;">=</div>
<div class="l" style="left:352px;top:653px;color:#8080b8;">=</div>
<div class="l" style="left:484px;top:653px;color:#8080b8;">=</div>
<div class="l" style="left:616px;top:653px;color:#8080b8;">=</div>
<div class="l" style="left:748px;top:653px;color:#8080b8;">=</div>
<div class="l" style="left:880px;top:653px;color:#8080b8;">=</div>
</div>
</body></html>
